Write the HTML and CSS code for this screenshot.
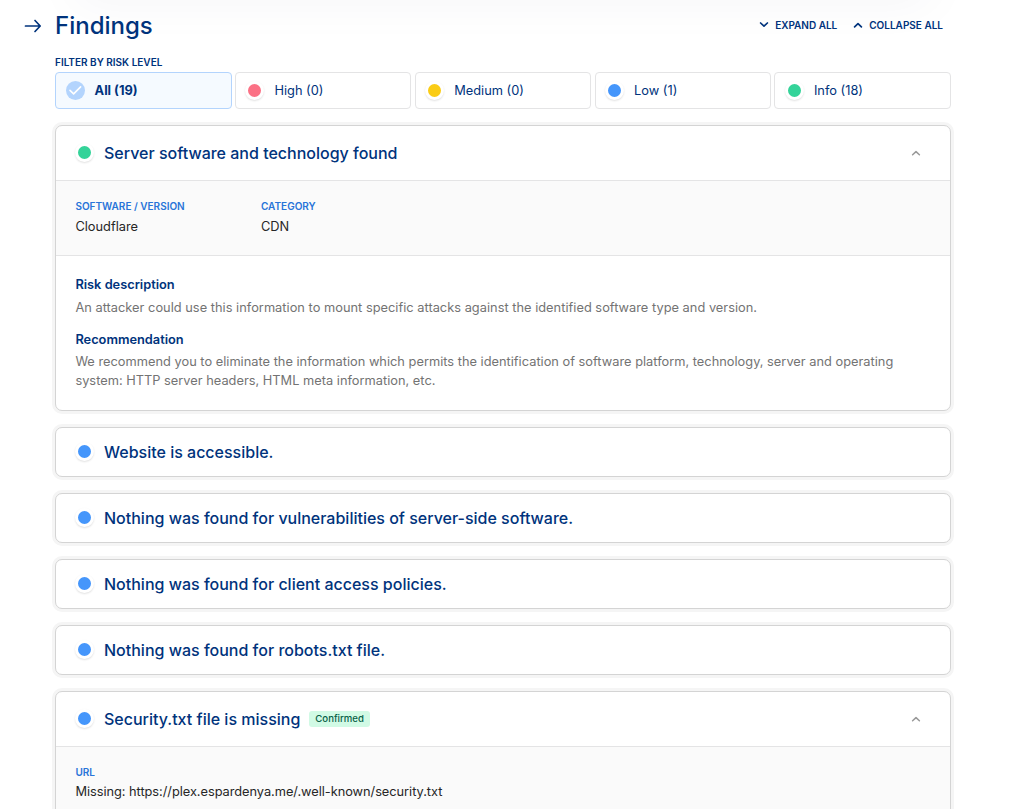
FILE: index.html
```
<!DOCTYPE html>
<html lang="en">
<head>
<meta charset="utf-8">
<title>Findings</title>
<link rel="stylesheet" href="styles.css">
</head>
<body>
<div class="previous-panel"></div>
<main class="findings">
  <header class="heading">
    <svg class="heading-arrow" width="18" height="14" viewBox="0 0 18 14"><path d="M1.500 7H16M11 1.500L16.200 7L11 12.500"/></svg>
    <h1 class="title">Findings</h1>
    <div class="actions">
      <a class="action"><svg class="action-icon" width="10" height="6" viewBox="0 0 10 6"><path d="M1.600 1L5 4.200L8.400 1"/></svg>EXPAND ALL</a>
      <a class="action"><svg class="action-icon" width="10" height="6" viewBox="0 0 10 6"><path d="M1.600 4.800L5 1.600L8.400 4.800"/></svg>COLLAPSE ALL</a>
    </div>
  </header>
  <div class="filter-label">FILTER BY RISK LEVEL</div>
  <div class="filters">
    <div class="filter filter-active"><svg class="check" width="19" height="19" viewBox="0 0 19 19"><circle cx="9.500" cy="9.500" r="9.500"/><path d="M4 9.400L7.600 12.900L14.600 5.900"/></svg>All (19)</div>
    <div class="filter"><span class="dot dot-high"></span>High (0)</div>
    <div class="filter"><span class="dot dot-medium"></span>Medium (0)</div>
    <div class="filter"><span class="dot dot-low"></span>Low (1)</div>
    <div class="filter"><span class="dot dot-info"></span>Info (18)</div>
  </div>
  <div class="cards">
    <section class="card">
      <div class="card-header card-header-open">
        <span class="dot dot-info"></span><h2 class="card-title">Server software and technology found</h2>
        <svg class="chevron" width="10" height="6" viewBox="0 0 10 6"><path d="M1.600 4.800L5 1.600L8.400 4.800"/></svg>
      </div>
      <div class="evidence">
        <div class="field"><div class="field-label">SOFTWARE / VERSION</div><div class="field-value">Cloudflare</div></div>
        <div class="field"><div class="field-label">CATEGORY</div><div class="field-value">CDN</div></div>
      </div>
      <div class="details">
        <h3 class="detail-title">Risk description</h3>
        <p class="detail-text detail-risk">An attacker could use this information to mount specific attacks against the identified software type and version.</p>
        <h3 class="detail-title">Recommendation</h3>
        <p class="detail-text">We recommend you to eliminate the information which permits the identification of software platform, technology, server and operating system: HTTP server headers, HTML meta information, etc.</p>
      </div>
    </section>
    <section class="card"><div class="card-header"><span class="dot dot-low"></span><h2 class="card-title">Website is accessible.</h2></div></section>
    <section class="card"><div class="card-header"><span class="dot dot-low"></span><h2 class="card-title">Nothing was found for vulnerabilities of server-side software.</h2></div></section>
    <section class="card"><div class="card-header"><span class="dot dot-low"></span><h2 class="card-title">Nothing was found for client access policies.</h2></div></section>
    <section class="card"><div class="card-header"><span class="dot dot-low"></span><h2 class="card-title">Nothing was found for robots.txt file.</h2></div></section>
    <section class="card">
      <div class="card-header card-header-open">
        <span class="dot dot-low"></span><h2 class="card-title">Security.txt file is missing</h2><span class="badge">Confirmed</span>
        <svg class="chevron" width="10" height="6" viewBox="0 0 10 6"><path d="M1.600 4.800L5 1.600L8.400 4.800"/></svg>
      </div>
      <div class="evidence">
        <div class="field"><div class="field-label">URL</div><div class="field-value field-url">Missing: https://plex.espardenya.me/.well-known/security.txt</div></div>
      </div>
    </section>
  </div>
</main>
</body>
</html>
```
FILE: styles.css
```
* { box-sizing: border-box; }
html, body { height: 100%; }
body {
  margin: 0;
  overflow: hidden;
  background: #fff;
  color: #00337c;
  font-family: Inter, "Liberation Sans", sans-serif;
  font-size: 12.8px;
}
h1, h2, h3, p { margin: 0; }
svg { display: block; flex: none; fill: none; stroke: #00337c; stroke-linecap: round; stroke-linejoin: round; }

/* Shadow cast by the panel above the findings */
.previous-panel {
  position: absolute;
  top: -40px;
  left: 75px;
  width: 856px;
  height: 34px;
  box-shadow: 0 4px 50px rgba(0, 30, 80, .06);
}

.findings { position: relative; width: 951px; padding-left: 24px; }

.heading { display: flex; align-items: center; height: 51px; }
.heading-arrow { stroke-width: 1.7; }
.title { margin-left: 13px; font-size: 24px; line-height: 30px; font-weight: 500; }
.actions { display: flex; gap: 16px; margin-left: auto; margin-right: 8px; padding-bottom: 1px; }
.action { display: flex; align-items: center; gap: 6px; font-size: 10px; line-height: 14px; font-weight: 600; }
.action-icon { stroke-width: 1.7; }

.filter-label { margin-left: 31px; padding-top: 4px; height: 21px; font-size: 10px; line-height: 14px; font-weight: 600; }
.filters { display: grid; grid-template-columns: repeat(5, 1fr); gap: 3.2px; margin-left: 31px; }
.filter { display: flex; align-items: center; gap: 10px; height: 37px; padding-left: 9.6px; border: 1px solid #e4e4e5; border-radius: 4px; line-height: 18px; }
.filter-active { background: #f5faff; border-color: #b3d4fd; font-weight: 700; }
.check { stroke: #fff; stroke-width: 1.6; }
.check circle { fill: #b3d4fd; stroke: none; }

.dot { flex: none; width: 19px; height: 19px; border: 3px solid #fff; border-radius: 50%; box-shadow: 0 1px 2px rgba(0, 0, 0, .12); }
.dot-high { background: #fb7185; }
.dot-medium { background: #facc15; }
.dot-low { background: #4596fb; }
.dot-info { background: #34d399; }

.cards { display: grid; gap: 16px; margin: 16px 0 0 31px; }
.card { border: 1px solid #d4d4d4; border-radius: 7px; box-shadow: 0 0 0 3px #f5f5f5; background: #fff; overflow: hidden; }
.card-header { display: flex; align-items: center; height: 48px; padding: 0 29px 0 19px; }
.card-header-open { height: 55px; border-bottom: 1px solid #e4e4e5; }
.card-title { margin-left: 10px; font-size: 16px; line-height: 24px; font-weight: 500; }
.card-header .dot { margin-bottom: 1px; }
.badge { margin-left: 9px; padding: 0 6px; border-radius: 3px; background: #d1fae5; color: #065f46; font-size: 9.6px; line-height: 16px; font-weight: 500; }
.chevron { margin-left: auto; stroke: #999; stroke-width: 1.5; }

.evidence { display: flex; height: 75px; padding: 17px 19.4px 0; background: #fafafa; border-bottom: 1px solid #e4e4e5; }
.field { width: 185.6px; }
.field-label { color: #2874d8; font-size: 10px; line-height: 16px; font-weight: 600; }
.field-value { margin-top: 2px; color: #262626; line-height: 22px; white-space: nowrap; }
.field-url { margin-top: 1px; letter-spacing: -.035px; }

.details { padding: 19px 19.4px 20px; }
.detail-title { font-size: 12.8px; line-height: 20px; font-weight: 600; }
.detail-text { margin-top: 2px; color: #737373; line-height: 19px; letter-spacing: .012px; }
.detail-risk { margin: 3px 0 13px; letter-spacing: .022px; }
```
